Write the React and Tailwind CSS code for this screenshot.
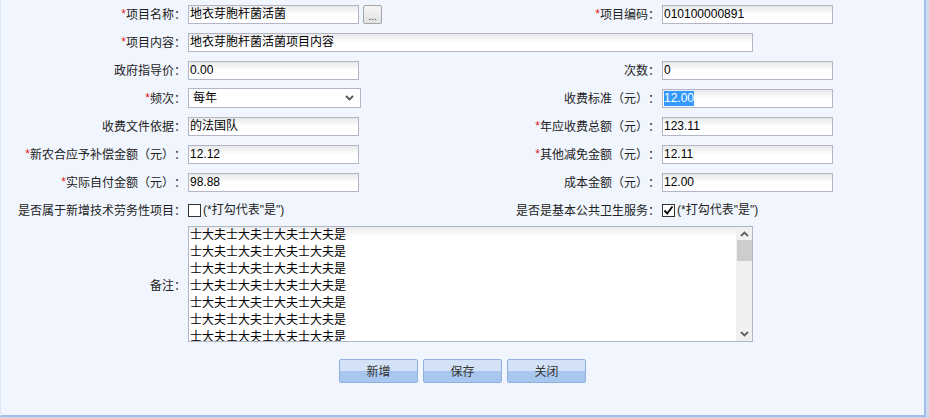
import React from 'react';

const font = { fontFamily: '"Liberation Sans", Arial, "Noto Sans CJK SC", sans-serif' };
const cjk = { fontFamily: '"Noto Sans CJK SC", "Liberation Sans", sans-serif' };

// Label cell: right aligned, optional red star
const Label = ({ req, children }) => (
  <div className="flex items-center justify-end h-[28px] text-[12px] text-[#222] whitespace-nowrap [text-spacing-trim:space-all] [font-feature-settings:'halt'_0]" style={cjk}>
    {req && <span className="text-[#e02020]" style={font}>*</span>}
    {children}：
  </div>
);

const Input = ({ value, w = 'w-[171px]', selected }) => (
  <div className={`${w} h-[19px] border border-[#b3b6c6] bg-gradient-to-b from-[#e9e9e9] via-white to-white flex items-center px-[1px] text-[12px] text-black`}>
    {selected ? <span className="bg-[#3399ff] text-white leading-[15px]">{value}</span> : value}
  </div>
);

const Cell = ({ children, span }) => (
  <div className={`flex items-center h-[28px] pl-[2px] ${span ? 'col-span-3' : ''}`}>{children}</div>
);

const Check = ({ checked }) => (
  <span className="w-[13px] h-[13px] border border-[#333] bg-white flex items-center justify-center mr-[2px]">
    {checked && (
      <svg width="11" height="11" viewBox="0 0 11 11">
        <path d="M1.5 5.5 L4.2 8.5 L9.5 1.5" fill="none" stroke="#111" strokeWidth="2" />
      </svg>
    )}
  </span>
);

const Btn = ({ children }) => (
  <button className="w-[79px] h-[24px] rounded-[2px] border border-[#8fb1e0] bg-gradient-to-b from-[#d3e2f6] from-50% to-[#a9c6ee] to-50% text-[12px] text-[#333]" style={cjk}>
    {children}
  </button>
);

export default function App() {
  const line = '士大夫士大夫士大夫士大夫是';
  return (
    <div className="w-[929px] h-[418px] bg-[#ccdbf0] overflow-hidden" style={font}>
      <div className="w-[926px] h-[417px] bg-[#f1f6fe] border-r-2 border-b-2 border-[#a3bde6] border-l border-l-[#dfe8f5]">
        <div className="grid grid-cols-[185px_288px_186px_1fr]">
          <Label req>项目名称</Label>
          <Cell>
            <Input value="地衣芽胞杆菌活菌" />
            <span className="ml-[4px] w-[19px] h-[19px] border border-[#a5a5a5] rounded-[2px] bg-gradient-to-b from-[#f6f6f6] to-[#e2e2e2] flex items-end justify-center text-[10px] leading-[12px] text-[#333]">...</span>
          </Cell>
          <Label req>项目编码</Label>
          <Cell><Input value="010100000891" /></Cell>

          <Label req>项目内容</Label>
          <Cell span><Input w="w-[565px]" value="地衣芽胞杆菌活菌项目内容" /></Cell>

          <Label>政府指导价</Label>
          <Cell><Input value="0.00" /></Cell>
          <Label>次数</Label>
          <Cell><Input value="0" /></Cell>

          <Label req>频次</Label>
          <Cell>
            <div className="w-[173px] h-[20px] border border-[#b3b6c6] bg-white flex items-center justify-between pl-[4px] pr-[6px] text-[12px] text-black">
              每年
              <svg width="9" height="6" viewBox="0 0 9 6">
                <path d="M1 1 L4.5 4.5 L8 1" fill="none" stroke="#555" strokeWidth="1.8" />
              </svg>
            </div>
          </Cell>
          <Label>收费标准（元）</Label>
          <Cell><Input value="12.00" selected /></Cell>

          <Label>收费文件依据</Label>
          <Cell><Input value="的法国队" /></Cell>
          <Label req>年应收费总额（元）</Label>
          <Cell><Input value="123.11" /></Cell>

          <Label req>新农合应予补偿金额（元）</Label>
          <Cell><Input value="12.12" /></Cell>
          <Label req>其他减免金额（元）</Label>
          <Cell><Input value="12.11" /></Cell>

          <Label req>实际自付金额（元）</Label>
          <Cell><Input value="98.88" /></Cell>
          <Label>成本金额（元）</Label>
          <Cell><Input value="12.00" /></Cell>

          <Label>是否属于新增技术劳务性项目</Label>
          <Cell>
            <Check />
            <span className="text-[12px] text-[#222]">(*打勾代表"是")</span>
          </Cell>
          <Label>是否是基本公共卫生服务</Label>
          <Cell>
            <Check checked />
            <span className="text-[12px] text-[#222]">(*打勾代表"是")</span>
          </Cell>

          <div className="flex items-center justify-end h-[118px] text-[12px] text-[#222] mt-[2px] [text-spacing-trim:space-all]" style={cjk}>备注：</div>
          <div className="col-span-3 pl-[2px] pt-[2px]">
            <div className="w-[565px] h-[116px] border border-[#b3b6c6] bg-white flex">
              <div className="flex-1 h-[114px] overflow-hidden bg-gradient-to-b from-[#ececec] via-white via-[8%] to-white pl-[1px] text-[12px] leading-[17px] text-black">
                {Array.from({ length: 7 }).map((_, i) => (
                  <div key={i}>{line}</div>
                ))}
              </div>
              <div className="w-[16px] bg-[#f0f0f0] flex flex-col items-center justify-between py-[4px]">
                <svg width="9" height="6" viewBox="0 0 9 6">
                  <path d="M1 5 L4.5 1.5 L8 5" fill="none" stroke="#606060" strokeWidth="1.8" />
                </svg>
                <div className="w-[15px] h-[21px] bg-[#cdcdcd] mb-auto mt-[3px]" />
                <svg width="9" height="6" viewBox="0 0 9 6">
                  <path d="M1 1 L4.5 4.5 L8 1" fill="none" stroke="#606060" strokeWidth="1.8" />
                </svg>
              </div>
            </div>
          </div>
        </div>

        <div className="flex justify-center gap-[5px] mt-[15px]">
          <Btn>新增</Btn>
          <Btn>保存</Btn>
          <Btn>关闭</Btn>
        </div>
      </div>
    </div>
  );
}
